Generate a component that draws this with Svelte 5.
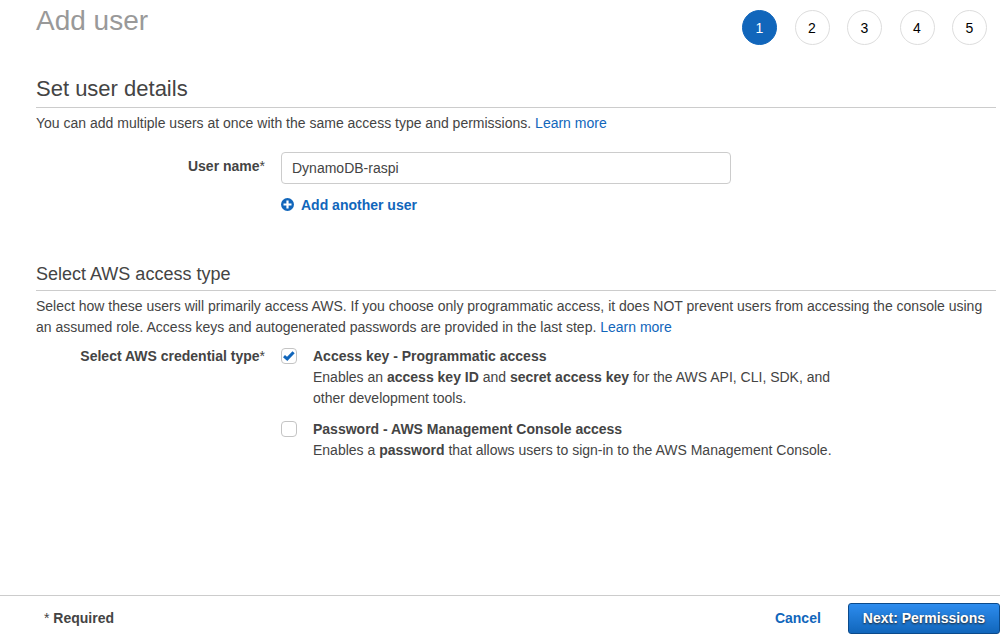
<script>
  const steps = [1, 2, 3, 4, 5];
  const current = 1;
  let userName = $state('DynamoDB-raspi');
  let programmatic = $state(true);
  let consoleAccess = $state(false);
</script>

<div class="page">
  <header>
    <h1>Add user</h1>
    <ol class="steps">
      {#each steps as step}
        <li class:active={step === current} aria-current={step === current ? 'step' : undefined}>{step}</li>
      {/each}
    </ol>
  </header>

  <main>
    <section class="details">
      <h2>Set user details</h2>
      <p>You can add multiple users at once with the same access type and permissions. <a href="#users">Learn more</a></p>
      <div class="row user-row">
        <label class="name" for="user-name">User name<span>*</span></label>
        <div class="field">
          <input id="user-name" class="text" type="text" bind:value={userName} />
          <button type="button" class="add">
            <svg width="14" height="14" viewBox="0 0 14 14" aria-hidden="true">
              <circle cx="6.5" cy="6.5" r="6.5" fill="#1166bb" />
              <path d="M6.5 2.5v8M2.5 6.5h8" stroke="#fff" stroke-width="2.2" />
            </svg>
            Add another user
          </button>
        </div>
      </div>
    </section>

    <section>
      <h3>Select AWS access type</h3>
      <p>Select how these users will primarily access AWS. If you choose only programmatic access, it does NOT prevent users from accessing the console using an assumed role. Access keys and autogenerated passwords are provided in the last step. <a href="#access">Learn more</a></p>
      <div class="row type-row" role="group" aria-labelledby="credential-type">
        <div class="name" id="credential-type">Select AWS credential type<span>*</span></div>
        <div class="options">
          <div class="option">
            <span class="box">
              <input id="programmatic" type="checkbox" bind:checked={programmatic} />
              <svg width="16" height="16" viewBox="0 0 16 16" aria-hidden="true">
                <path d="M3 8.2L6.2 10.9L12.6 4.3" fill="none" stroke="#1166bb" stroke-width="3" />
              </svg>
            </span>
            <label for="programmatic">
              <strong>Access key - Programmatic access</strong><br />
              Enables an <strong>access key ID</strong> and <strong>secret access key</strong> for the AWS API, CLI, SDK, and other development tools.
            </label>
          </div>
          <div class="option">
            <span class="box">
              <input id="console-access" type="checkbox" bind:checked={consoleAccess} />
              <svg width="16" height="16" viewBox="0 0 16 16" aria-hidden="true">
                <path d="M3 8.2L6.2 10.9L12.6 4.3" fill="none" stroke="#1166bb" stroke-width="3" />
              </svg>
            </span>
            <label for="console-access">
              <strong>Password - AWS Management Console access</strong><br />
              Enables a <strong>password</strong> that allows users to sign-in to the AWS Management Console.
            </label>
          </div>
        </div>
      </div>
    </section>
  </main>

  <footer>
    <div class="required"><span>*</span> Required</div>
    <button type="button" class="cancel">Cancel</button>
    <button type="button" class="next">Next: Permissions</button>
  </footer>
</div>

<style>
  :global(body) {
    margin: 0;
    background: #fff;
  }
  .page {
    box-sizing: border-box;
    min-height: 100vh;
    display: flex;
    flex-direction: column;
    font: 14px/21px "Liberation Sans", Arial, sans-serif;
    color: #444;
  }
  header {
    display: flex;
    justify-content: space-between;
    align-items: flex-start;
    padding: 4px 13px 0 36px;
  }
  h1, h2, h3 {
    margin: 0;
    font-weight: normal;
  }
  h1 {
    font-size: 28px;
    line-height: 34px;
    color: #999;
  }
  .steps {
    box-sizing: border-box;
    display: flex;
    justify-content: space-between;
    width: 245px;
    margin: 0;
    padding: 6px 0 0;
    list-style: none;
  }
  .steps li {
    box-sizing: border-box;
    width: 35px;
    height: 35px;
    border: 1px solid #ddd;
    border-radius: 50%;
    line-height: 35px;
    text-align: center;
    color: #000;
  }
  .steps .active {
    background: #1166bb;
    border-color: #1166bb;
    color: #fff;
  }
  main {
    flex: 1;
    padding: 29px 4px 24px 36px;
  }
  h2 {
    padding-bottom: 3px;
    border-bottom: 1px solid #ccc;
    font-size: 22px;
    line-height: 30px;
  }
  h3 {
    padding-bottom: 3px;
    border-bottom: 1px solid #ccc;
    font-size: 18px;
    line-height: 26px;
  }
  p {
    margin: 0;
    padding-top: 5px;
  }
  a {
    color: #1166bb;
    text-decoration: none;
  }
  .details {
    margin-bottom: 45px;
  }
  .row {
    display: grid;
    grid-template-columns: 229px minmax(0, 1fr);
    column-gap: 16px;
  }
  .user-row {
    padding-top: 18px;
  }
  .type-row {
    padding-top: 8px;
  }
  .name {
    text-align: right;
    font-weight: bold;
  }
  .user-row .name {
    padding-top: 4px;
  }
  .name span, .required span {
    font-weight: normal;
  }
  .field {
    display: flex;
    flex-direction: column;
    align-items: flex-start;
    gap: 11px;
  }
  .text {
    box-sizing: border-box;
    width: 100%;
    max-width: 450px;
    height: 32px;
    padding: 0 10px;
    border: 1px solid #ccc;
    border-radius: 4px;
    background: #fff;
    font: inherit;
    color: #444;
  }
  button {
    margin: 0;
    padding: 0;
    border: 0;
    background: none;
    font: inherit;
    font-weight: bold;
    color: #1166bb;
    cursor: pointer;
  }
  .add {
    display: flex;
    align-items: center;
    gap: 6px;
  }
  .add svg {
    margin-bottom: 2px;
  }
  .options {
    display: grid;
    gap: 10px;
    max-width: 560px;
  }
  .option {
    display: flex;
    gap: 16px;
  }
  .box {
    flex: none;
    display: grid;
    width: 16px;
    height: 16px;
    margin-top: 2px;
  }
  .box > * {
    grid-area: 1 / 1;
  }
  .box input {
    appearance: none;
    box-sizing: border-box;
    width: 16px;
    height: 16px;
    margin: 0;
    border: 1px solid #c4c4c4;
    border-radius: 4px;
    background: #fff;
  }
  .box svg {
    visibility: hidden;
    pointer-events: none;
  }
  .box input:checked + svg {
    visibility: visible;
  }
  footer {
    display: flex;
    align-items: center;
    padding: 7px 0 3px 44px;
    border-top: 1px solid #ccc;
  }
  .required {
    flex: 1;
    font-weight: bold;
  }
  .cancel {
    margin-right: 27px;
  }
  .next {
    padding: 4px 14px;
    border: 1px solid #0b4a8b;
    border-radius: 3px;
    background: linear-gradient(#2d8cee, #1166bb);
    color: #fff;
    text-shadow: 0 1px 2px #222;
  }
</style>
